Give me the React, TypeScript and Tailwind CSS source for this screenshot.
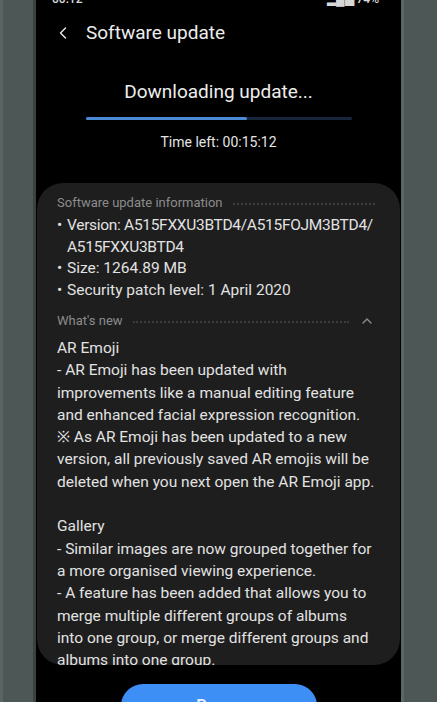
import { ChevronLeft, ChevronUp } from 'lucide-react'

const whatsNew = [
  'AR Emoji',
  '- AR Emoji has been updated with improvements like a manual editing feature and enhanced facial expression recognition.',
  '※ As AR Emoji has been updated to a new version, all previously saved AR emojis will be deleted when you next open the AR Emoji app.',
  '',
  'Gallery',
  '- Similar images are now grouped together for a more organised viewing experience.',
  '- A feature has been added that allows you to merge multiple different groups of albums into one group, or merge different groups and albums into one group.',
]

export default function App() {
  return (
    <div
      className="flex h-[702px] w-[437px] overflow-hidden bg-[#4d5755]"
      style={{ fontFamily: 'Roboto, "Open Sans", sans-serif' }}
    >
      {/* left frame */}
      <div className="flex w-[36px] shrink-0">
        <div className="w-[3px] bg-[#5a6462]" />
        <div className="flex-1 bg-[#4d5755]" />
        <div className="w-[3px] bg-[#3b4241]" />
      </div>

      {/* screen */}
      <div className="flex w-[365px] shrink-0 flex-col bg-black">
        {/* status bar, cut off at the top */}
        <div className="relative h-[7px] shrink-0 overflow-hidden">
          <div className="-mt-[10px] flex items-center justify-between px-[16px] text-[12px] font-medium text-[#d8d8d8]">
            <span>00:12</span>
            <span className="pr-[6px]">▂▄▆ 74%</span>
          </div>
        </div>

        {/* header */}
        <div className="mt-[1px] flex h-[50px] shrink-0 items-center pl-[17px]">
          <ChevronLeft className="h-[20px] w-[20px] text-[#e6e6e6]" strokeWidth={1.75} />
          <span className="ml-[13px] text-[19px] text-[#ededed]">Software update</span>
        </div>

        {/* progress */}
        <div className="mt-[21px] flex shrink-0 flex-col items-center">
          <div className="text-[19px] leading-[26px] text-[#ededed]">Downloading update...</div>
          <div className="mt-[12px] h-[3px] w-[266px] rounded-full bg-[#17263a]">
            <div className="h-full w-[161px] rounded-full bg-[#4a8ad6]" />
          </div>
          <div className="mt-[12px] text-[14px] leading-[20px] text-[#e4e4e4]">Time left: 00:15:12</div>
        </div>

        {/* info card */}
        <div className="mx-[1px] mt-[31px] h-[482px] shrink-0 overflow-hidden rounded-[26px] bg-[#1e1e1e] pl-[20px] pr-[25px] pt-[10px]">
          <div className="flex items-center gap-[10px]">
            <span className="text-[13px] leading-[20px] text-[#8c8c8c]">Software update information</span>
            <div className="mt-[2px] flex-1 border-b-2 border-dotted border-[#3c3c3c]" />
          </div>

          <ul className="mt-[2px] text-[15.5px] leading-[21.5px] text-[#e2e2e2]">
            <li className="flex">
              <span className="w-[10px] shrink-0">•</span>
              <span className="whitespace-nowrap tracking-[-0.3px]">
                Version: A515FXXU3BTD4/A515FOJM3BTD4/
                <br />
                A515FXXU3BTD4
              </span>
            </li>
            <li className="flex">
              <span className="w-[10px] shrink-0">•</span>
              <span>Size: 1264.89 MB</span>
            </li>
            <li className="flex">
              <span className="w-[10px] shrink-0">•</span>
              <span>Security patch level: 1 April 2020</span>
            </li>
          </ul>

          <div className="mt-[10px] flex items-center gap-[10px]">
            <span className="text-[13px] leading-[20px] text-[#8c8c8c]">What's new</span>
            <div className="mt-[2px] flex-1 border-b-2 border-dotted border-[#3c3c3c]" />
            <ChevronUp className="h-[16px] w-[16px] text-[#8c8c8c]" strokeWidth={2} />
          </div>

          <div className="mt-[6px] text-[15.5px] leading-[22.3px] text-[#e2e2e2]">
            {whatsNew.map((line, i) =>
              line ? <p key={i}>{line}</p> : <div key={i} className="h-[22.3px]" />
            )}
          </div>
        </div>

        {/* button */}
        <div className="mt-[19px] flex shrink-0 justify-center">
          <button className="h-[44px] w-[196px] rounded-full bg-[#3d8ef5] text-[16px] font-medium text-[#eaf2ff]">
            Pause
          </button>
        </div>
      </div>

      {/* right frame */}
      <div className="flex flex-1">
        <div className="w-[3px] bg-[#5c6664]" />
        <div className="flex-1 bg-[#4d5755]" />
      </div>
    </div>
  )
}
